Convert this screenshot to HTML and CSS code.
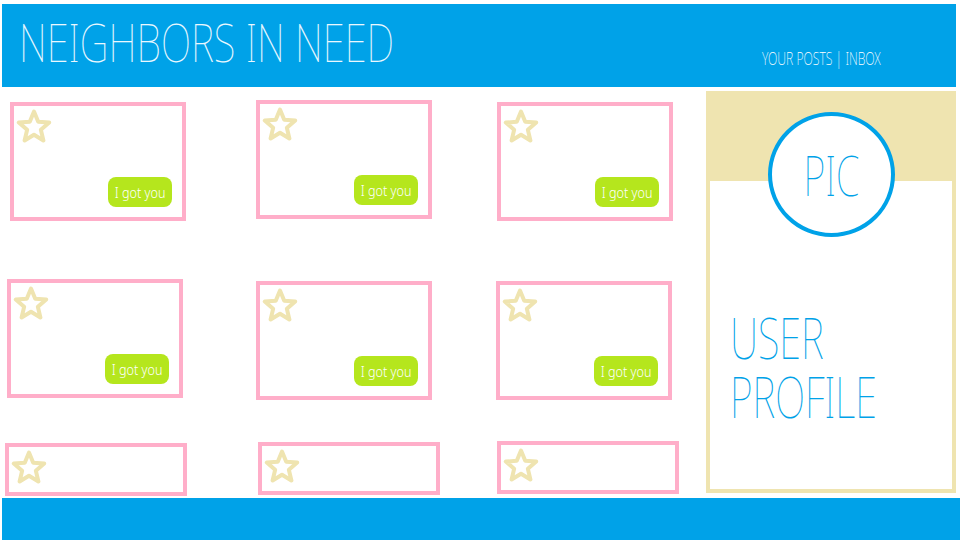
FILE: index.html
```html
<!DOCTYPE html>
<html lang="en">
<head>
<meta charset="utf-8">
<title>Neighbors in Need</title>
<link rel="stylesheet" href="styles.css">
</head>
<body>
<header class="topbar">
  <h1 class="brand"><span class="squeeze">NEIGHBORS IN NEED</span></h1>
  <nav class="nav"><span class="squeeze squeeze-right"><a href="#">YOUR POSTS</a> | <a href="#">INBOX</a></span></nav>
</header>
<main class="content">
  <section class="posts">
    <article class="card nudge-a">
      <svg class="star" viewBox="0 0 36 36"><polygon points="18,3.5 22.23,13.68 33.22,14.56 24.85,21.72 27.41,32.44 18,26.7 8.59,32.44 11.15,21.72 2.78,14.56 13.77,13.68"/></svg>
      <button class="help"><span class="help-label">I got you</span></button>
    </article>
    <article class="card nudge-b">
      <svg class="star" viewBox="0 0 36 36"><polygon points="18,3.5 22.23,13.68 33.22,14.56 24.85,21.72 27.41,32.44 18,26.7 8.59,32.44 11.15,21.72 2.78,14.56 13.77,13.68"/></svg>
      <button class="help"><span class="help-label">I got you</span></button>
    </article>
    <article class="card nudge-c">
      <svg class="star" viewBox="0 0 36 36"><polygon points="18,3.5 22.23,13.68 33.22,14.56 24.85,21.72 27.41,32.44 18,26.7 8.59,32.44 11.15,21.72 2.78,14.56 13.77,13.68"/></svg>
      <button class="help"><span class="help-label">I got you</span></button>
    </article>
    <article class="card nudge-d">
      <svg class="star" viewBox="0 0 36 36"><polygon points="18,3.5 22.23,13.68 33.22,14.56 24.85,21.72 27.41,32.44 18,26.7 8.59,32.44 11.15,21.72 2.78,14.56 13.77,13.68"/></svg>
      <button class="help"><span class="help-label">I got you</span></button>
    </article>
    <article class="card nudge-e">
      <svg class="star" viewBox="0 0 36 36"><polygon points="18,3.5 22.23,13.68 33.22,14.56 24.85,21.72 27.41,32.44 18,26.7 8.59,32.44 11.15,21.72 2.78,14.56 13.77,13.68"/></svg>
      <button class="help"><span class="help-label">I got you</span></button>
    </article>
    <article class="card nudge-e">
      <svg class="star" viewBox="0 0 36 36"><polygon points="18,3.5 22.23,13.68 33.22,14.56 24.85,21.72 27.41,32.44 18,26.7 8.59,32.44 11.15,21.72 2.78,14.56 13.77,13.68"/></svg>
      <button class="help"><span class="help-label">I got you</span></button>
    </article>
    <article class="card card-short nudge-f">
      <svg class="star" viewBox="0 0 36 36"><polygon points="18,3.5 22.23,13.68 33.22,14.56 24.85,21.72 27.41,32.44 18,26.7 8.59,32.44 11.15,21.72 2.78,14.56 13.77,13.68"/></svg>
    </article>
    <article class="card card-short nudge-g">
      <svg class="star" viewBox="0 0 36 36"><polygon points="18,3.5 22.23,13.68 33.22,14.56 24.85,21.72 27.41,32.44 18,26.7 8.59,32.44 11.15,21.72 2.78,14.56 13.77,13.68"/></svg>
    </article>
    <article class="card card-short nudge-h">
      <svg class="star" viewBox="0 0 36 36"><polygon points="18,3.5 22.23,13.68 33.22,14.56 24.85,21.72 27.41,32.44 18,26.7 8.59,32.44 11.15,21.72 2.78,14.56 13.77,13.68"/></svg>
    </article>
  </section>
  <aside class="profile">
    <div class="pic"><span class="squeeze squeeze-center">PIC</span></div>
    <div class="profile-title">
      <span class="profile-line"><span class="squeeze">USER</span></span>
      <span class="profile-line"><span class="squeeze">PROFILE</span></span>
    </div>
  </aside>
</main>
<footer class="bottombar"></footer>
</body>
</html>
```
FILE: styles.css
```css
* { box-sizing: border-box; }

html, body {
  margin: 0;
  padding: 0;
  width: 960px;
  height: 540px;
  overflow: hidden;
  background: #ffffff;
  font-family: "Noto Sans", "DejaVu Sans", sans-serif;
  font-weight: 100;
}

.squeeze {
  display: inline-block;
  white-space: nowrap;
  transform: scaleX(0.75);
  transform-origin: left center;
}

.squeeze-right {
  transform-origin: right center;
}

.squeeze-center {
  transform-origin: center center;
}

.topbar {
  margin: 4px 4px 0 2px;
  height: 83px;
  background: #00a2e8;
  display: flex;
  justify-content: space-between;
  align-items: flex-start;
  padding: 0 75px 0 17px;
}

.brand {
  margin: 11px 0 0 0;
  font-size: 53px;
  line-height: 1;
  font-weight: 100;
  color: #eaf8ff;
}

.nav {
  margin-top: 45px;
  font-size: 18px;
  line-height: 1;
  color: #ffffff;
  font-weight: 200;
}

.nav .squeeze {
  transform: scaleX(0.68);
}

.nav a {
  color: #ffffff;
  text-decoration: none;
}

.content {
  display: flex;
  height: 411px;
}

.posts {
  width: 706px;
  display: grid;
  grid-template-columns: 249px 240px 1fr;
  grid-template-rows: 179px 162px 1fr;
  padding: 14px 0 0 7px;
}

.card {
  width: 176px;
  height: 119px;
  border: 4px solid #ffaec9;
  background: #ffffff;
  display: flex;
  flex-direction: column;
  align-items: flex-start;
  padding: 2px 10px 10px 2px;
}

.card-short {
  width: 182px;
  height: 53px;
}

/* hand-drawn jitter of the mockup */
.nudge-a { margin: 1px 0 0 3px; }
.nudge-b { margin: -1px 0 0 0; }
.nudge-c { margin: 1px 0 0 1px; }
.nudge-d { margin: -1px 0 0 0; }
.nudge-e { margin: 1px 0 0 0; }
.nudge-f { margin: 1px 0 0 -2px; }
.nudge-g { margin: 0 0 0 2px; }
.nudge-h { margin: -1px 0 0 1px; }

.star {
  width: 36px;
  height: 36px;
  flex: none;
}

.star polygon {
  fill: none;
  stroke: #efe4b0;
  stroke-width: 4;
  stroke-linejoin: round;
}

.help {
  margin-top: auto;
  align-self: flex-end;
  width: 64px;
  height: 30px;
  border: none;
  border-radius: 8px;
  background: #b5e61d;
  color: #ffffff;
  font-family: inherit;
  font-weight: 300;
  font-size: 15px;
  padding: 0;
  display: flex;
  align-items: center;
  justify-content: center;
}

.help-label {
  display: inline-block;
  white-space: nowrap;
  transform: scaleX(0.84);
}

.profile {
  width: 250px;
  height: 402px;
  margin-top: 4px;
  border: 4px solid #efe4b0;
  background: linear-gradient(#efe4b0 0 86px, #ffffff 86px);
  display: flex;
  flex-direction: column;
  align-items: center;
}

.pic {
  margin-top: 17px;
  width: 127px;
  height: 125px;
  border: 4px solid #00a2e8;
  border-radius: 50%;
  background: #ffffff;
  display: flex;
  align-items: center;
  justify-content: center;
  color: #00a2e8;
  font-size: 55px;
  font-weight: 100;
  line-height: 1;
}

.pic .squeeze {
  transform: scaleX(0.69);
}

.profile-title {
  align-self: flex-start;
  margin: 75px 0 0 20px;
  display: flex;
  flex-direction: column;
  color: #00a2e8;
  font-size: 57px;
  font-weight: 100;
}

.profile-line {
  display: block;
  height: 59px;
  line-height: 50px;
}

.profile-line .squeeze {
  transform: scaleX(0.69);
}

.bottombar {
  margin-left: 2px;
  height: 42px;
  background: #00a2e8;
}
```
